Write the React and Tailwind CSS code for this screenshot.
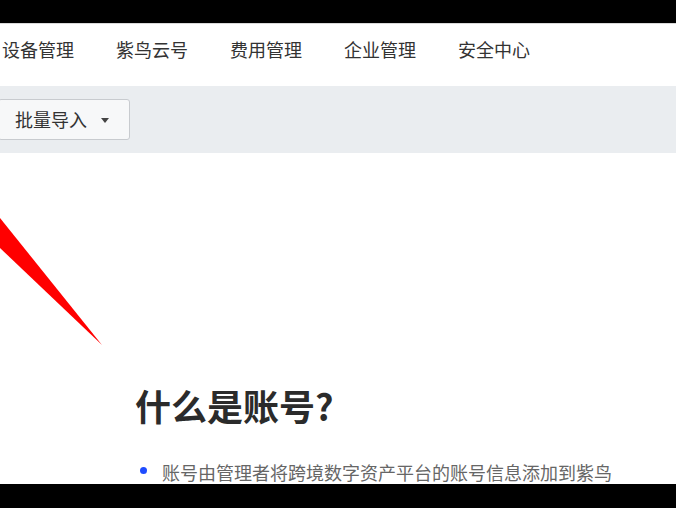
import React from "react";

const font = { fontFamily: '"Noto Sans CJK SC", "Noto Sans", sans-serif' };

export default function App() {
  const nav = ["设备管理", "紫鸟云号", "费用管理", "企业管理", "安全中心"];
  return (
    <div
      className="relative w-[676px] h-[508px] overflow-hidden bg-black flex flex-col"
      style={font}
    >
      <div className="h-[23px] shrink-0 bg-black" />
      <div className="h-[1px] shrink-0 bg-[#d9d9d9]" />
      <div className="h-[62px] shrink-0 bg-white flex items-center pl-[2px] pb-[12px] gap-[42px]">
        {nav.map((n) => (
          <span key={n} className="text-[18px] leading-none text-[#333] whitespace-nowrap">
            {n}
          </span>
        ))}
      </div>
      <div className="h-[67px] shrink-0 bg-[#eaedf0] flex items-center">
        <div className="ml-[-2px] w-[132px] h-[41px] mt-[-1px] bg-[#f7f8f9] border border-[#c8cbcf] rounded-[3px] flex items-center pl-[16px] gap-[14px]">
          <span className="text-[18px] leading-none text-[#333] whitespace-nowrap">批量导入</span>
          <span className="w-0 h-0 border-l-[4px] border-r-[4px] border-t-[5px] border-l-transparent border-r-transparent border-t-[#444] mt-[2px]" />
        </div>
      </div>
      <div className="flex-1 bg-white flex flex-col pl-[135px] pt-[234px]">
        <h1 className="text-[36px] leading-none font-bold text-[#2b2b2b] whitespace-nowrap">什么是账号?</h1>
        <div className="mt-[40px] flex items-center">
          <span className="w-[7px] h-[7px] rounded-full bg-[#1f4cff] ml-[5px] mt-[-3px]" />
          <span className="ml-[15px] text-[18px] leading-none text-[#666] whitespace-nowrap">
            账号由管理者将跨境数字资产平台的账号信息添加到紫鸟
          </span>
        </div>
      </div>
      <div className="h-[24px] shrink-0 bg-black" />
      <svg className="absolute left-0 top-0" width="676" height="508" viewBox="0 0 676 508">
        <polygon points="0,218 0,248 102,345" fill="#ff0000" />
      </svg>
    </div>
  );
}
